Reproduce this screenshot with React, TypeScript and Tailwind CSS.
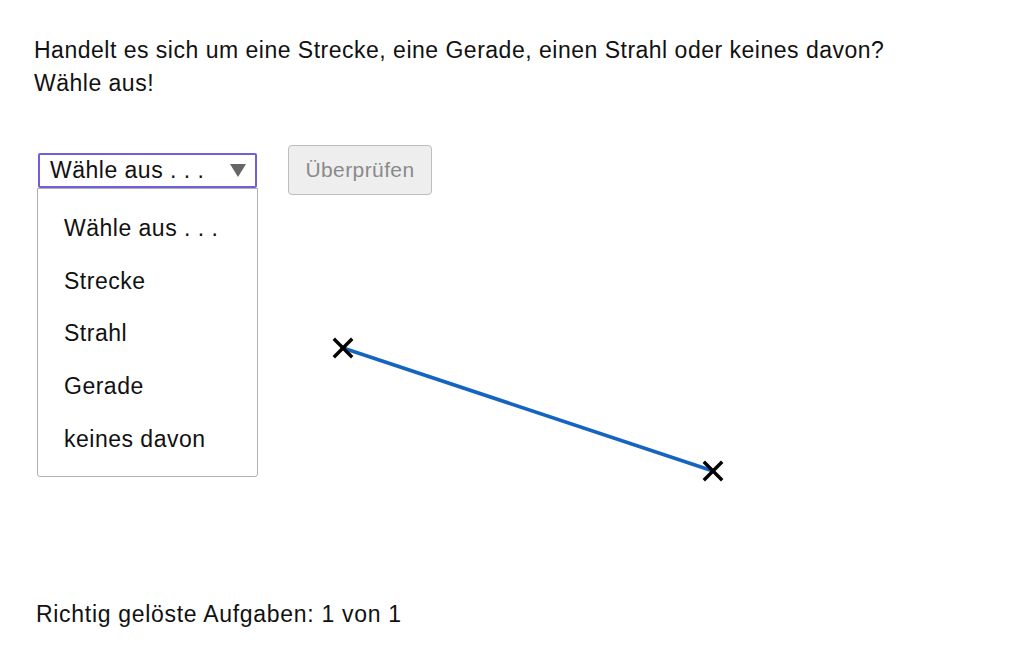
import React from "react";

const font = { fontFamily: '"Liberation Sans", Arial, sans-serif' };

function Cross({ x, y }: { x: number; y: number }) {
  const s = 8;
  return (
    <g stroke="#000" strokeWidth={3.4} strokeLinecap="square">
      <line x1={x - s} y1={y - s} x2={x + s} y2={y + s} />
      <line x1={x - s} y1={y + s} x2={x + s} y2={y - s} />
    </g>
  );
}

export default function App() {
  const options = ["Wähle aus . . .", "Strecke", "Strahl", "Gerade", "keines davon"];
  return (
    <div className="w-[1032px] h-[645px] bg-white text-[#111] flex flex-col tracking-[0.5px]" style={font}>
      <div className="pl-[34px] pt-[34px] text-[23px] leading-[33px]">
        <p>Handelt es sich um eine Strecke, eine Gerade, einen Strahl oder keines davon?</p>
        <p>Wähle aus!</p>
      </div>
      <div className="flex items-start gap-[31px] pl-[38px] mt-[45px]">
        <div className="relative mt-[8px]">
          <div className="w-[219px] h-[35px] border-2 border-[#6f5fd8] rounded-[2px] flex items-center justify-between pl-[10px] pr-[9px] text-[23px]">
            <span>Wähle aus . . .</span>
            <svg width="16" height="13" viewBox="0 0 16 13">
              <polygon points="0,0 16,0 8,13" fill="#666" />
            </svg>
          </div>
          <div className="absolute left-[-1px] top-[35px] w-[221px] h-[289px] border border-[#b0b0b0] rounded-b-[3px] bg-white flex flex-col pl-[26px] pt-[13px] text-[23px] z-10">
            {options.map((o) => (
              <div key={o} className="h-[52.7px] leading-[52.7px]">
                {o}
              </div>
            ))}
          </div>
        </div>
        <button className="w-[144px] h-[50px] border border-[#bdbdbd] rounded-[4px] bg-[#eeeeee] text-[#8a8a8a] text-[21px] tracking-[0.4px]">
          Überprüfen
        </button>
      </div>
      <div className="flex-1 relative">
        <svg width="1032" height="395" className="block">
          <line x1={343} y1={153} x2={713} y2={276} stroke="#1565c0" strokeWidth={3.6} />
          <Cross x={343} y={153} />
          <Cross x={713} y={276} />
        </svg>
      </div>
      <div className="pl-[36px] pb-[16px] text-[23px] leading-[30px] tracking-[0.7px]">Richtig gelöste Aufgaben: 1 von 1</div>
    </div>
  );
}
